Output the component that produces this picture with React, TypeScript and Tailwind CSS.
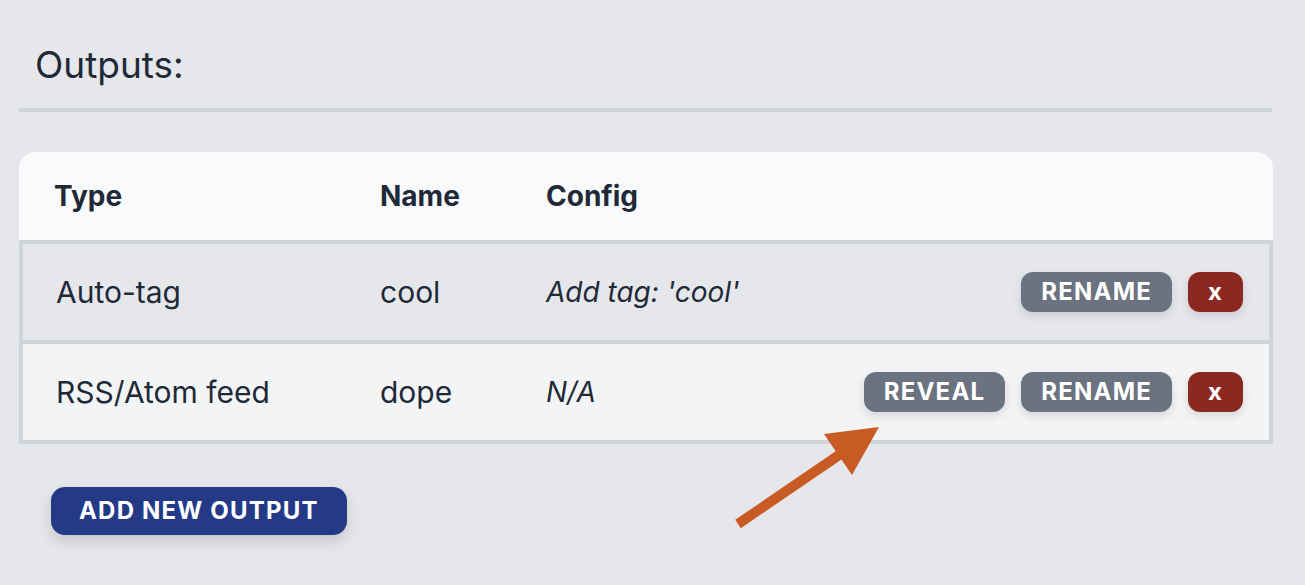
const rows = [
  { type: "Auto-tag", name: "cool", config: "Add tag: 'cool'", reveal: false, bg: "bg-[#e5e7eb]" },
  { type: "RSS/Atom feed", name: "dope", config: "N/A", reveal: true, bg: "bg-[#f3f4f6]" },
];

function Btn({ label, red }: { label: string; red?: boolean }) {
  return (
    <button
      className={
        "h-10 rounded-xl text-white font-bold tracking-wider text-[24px] leading-none shadow-[0_4px_10px_rgba(0,0,0,0.12)] " +
        (red ? "bg-[#8b2822] w-[55px]" : "bg-[#6b7280] px-[20px]")
      }
    >
      {label}
    </button>
  );
}

export default function App() {
  return (
    <div
      className="relative w-[1305px] h-[585px] bg-[#e5e7eb] text-[#1f2937] px-[19px] pt-[45px] overflow-hidden"
      style={{ fontFamily: "Inter, 'Liberation Sans', sans-serif" }}
    >
      <h2 className="pl-[16px] pb-[23px] text-[37px] leading-[40px] border-b-4 border-[#d1d5db] w-[1253px]">
        Outputs:
      </h2>

      <div className="mt-[40px] w-[1254px]">
        <div className="h-[88px] bg-[#f9fafb] rounded-t-2xl flex items-center pl-[35px] text-[28px] leading-[40px] font-bold">
          <div className="w-[326px]">Type</div>
          <div className="w-[166px]">Name</div>
          <div>Config</div>
        </div>
        <div className="border-4 border-[#d1d5db] divide-y-4 divide-[#d1d5db]">
          {rows.map(r => (
            <div key={r.name} className={"h-[100px] last:h-[96px] flex items-center pl-[33px] pr-[26px] text-[30px] leading-[40px] " + r.bg}>
              <div className="w-[324px]">{r.type}</div>
              <div className="w-[166px]">{r.name}</div>
              <div className="italic text-[28px]">{r.config}</div>
              <div className="ml-auto flex gap-4">
                {r.reveal && <Btn label="REVEAL" />}
                <Btn label="RENAME" />
                <Btn label="x" red />
              </div>
            </div>
          ))}
        </div>
      </div>

      <button className="mt-[43px] ml-[32px] h-12 px-[28px] rounded-[14px] bg-[#243a87] text-white font-bold tracking-wider text-[24px] leading-none shadow-[0_6px_14px_rgba(0,0,0,0.15)]">
        ADD NEW OUTPUT
      </button>

      <svg className="absolute inset-0 pointer-events-none" width="1305" height="585" viewBox="0 0 1305 585">
        <line x1="738" y1="524" x2="845" y2="451" stroke="#c85a24" strokeWidth="10" />
        <polygon points="824,434 879,427 852,475" fill="#c85a24" />
      </svg>
    </div>
  );
}
